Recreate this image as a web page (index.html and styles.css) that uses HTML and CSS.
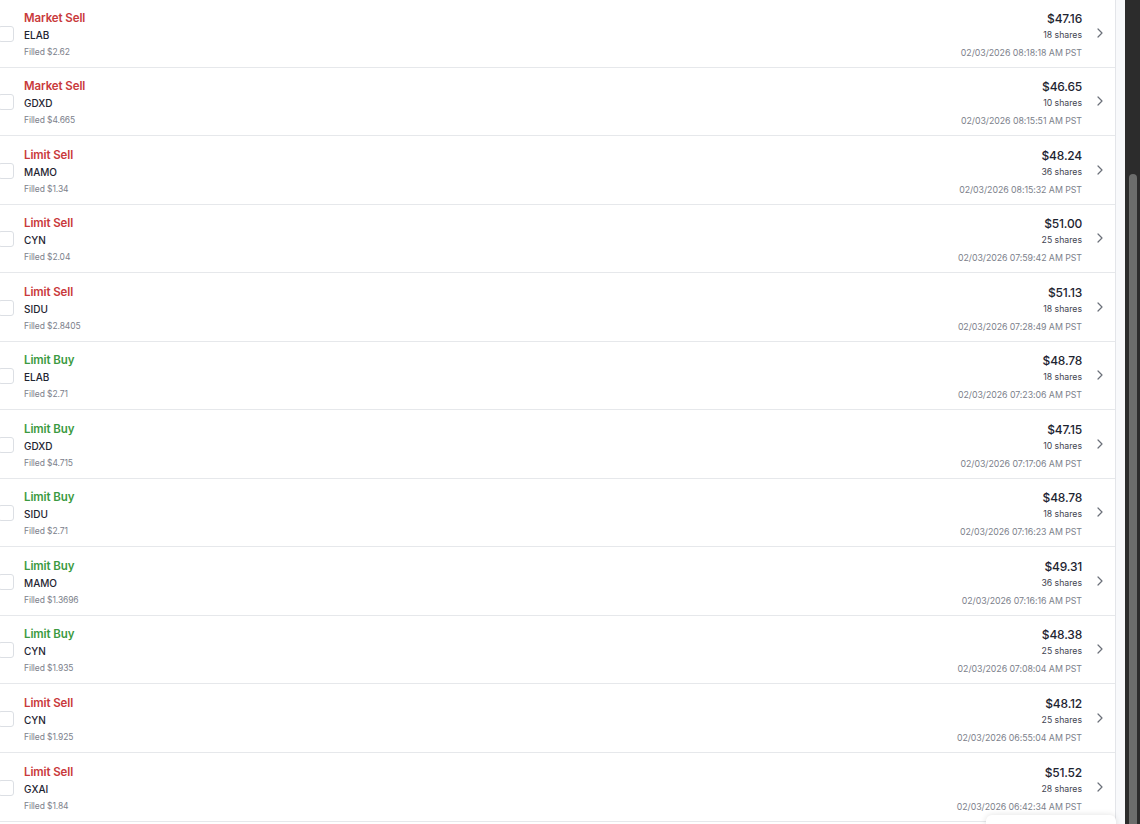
FILE: index.html
```html
<!DOCTYPE html>
<html>
<head>
<meta charset="utf-8">
<link rel="stylesheet" href="styles.css">
</head>
<body>
<div class="page">
  <div class="list" id="list"></div>
  <div class="gutter"></div>
  <div class="scrollbar"><div class="thumb"></div></div>
  <div class="toast"></div>
</div>
<script src="app.js"></script>
</body>
</html>
```
FILE: styles.css
```css
* { box-sizing: border-box; }
html, body { margin: 0; padding: 0; }
body {
  width: 1140px;
  height: 824px;
  overflow: hidden;
  background: #fff;
  font-family: Inter, "Noto Sans", sans-serif;
}
.page {
  display: flex;
  height: 824px;
  overflow: hidden;
  position: relative;
}
.list {
  width: 1116px;
  height: 825px;
  overflow: hidden;
  margin-top: -1px;
  border-right: 1px solid #e3e5e9;
}
.row {
  height: 68.55px;
  border-bottom: 1px solid #e6e8eb;
  display: flex;
  align-items: flex-start;
  padding-top: 10.5px;
}
.check {
  width: 16px;
  height: 16px;
  margin-left: -2px;
  margin-top: 16px;
  border: 1px solid #dcdfe4;
  border-radius: 3px;
  flex: none;
}
.left {
  margin-left: 10px;
  display: flex;
  flex-direction: column;
}
.right {
  margin-left: auto;
  display: flex;
  flex-direction: column;
  align-items: flex-end;
}
.line { height: 17px; line-height: 17px; white-space: nowrap; }
.type { font-size: 11.5px; font-weight: 600; letter-spacing: -0.1px; }
.sell { color: #c93a3c; }
.buy { color: #3b9a41; }
.ticker { font-size: 10px; font-weight: 500; color: #1e2431; }
.filled { font-size: 8.5px; color: #7c818b; letter-spacing: -0.1px; }
.price { font-size: 12px; font-weight: 500; color: #1e2431; letter-spacing: -0.2px; }
.shares { font-size: 8.7px; color: #3f4450; }
.time { font-size: 8.8px; color: #7c818b; letter-spacing: -0.05px; }
.chev {
  width: 33px;
  flex: none;
  display: flex;
  justify-content: center;
  padding-top: 18px;
  padding-left: 2px;
}
.chev svg { display: block; }
.gutter {
  width: 9px;
  background: #f8f9fb;
}
.scrollbar {
  width: 15px;
  background: #2c2c2c;
  position: relative;
}
.thumb {
  position: absolute;
  left: 4px;
  top: 174px;
  width: 8px;
  height: 700px;
  border-radius: 4px;
  background: #6c6d6c;
}
.toast {
  position: absolute;
  left: 986px;
  top: 815px;
  width: 130px;
  height: 40px;
  background: #fff;
  border-radius: 6px;
  box-shadow: 0 0 6px rgba(0,0,0,0.12);
}
```
FILE: app.js
```js
const rows = [
  ["Market Sell","sell","ELAB","$2.62","$47.16","18","02/03/2026 08:18:18 AM PST"],
  ["Market Sell","sell","GDXD","$4.665","$46.65","10","02/03/2026 08:15:51 AM PST"],
  ["Limit Sell","sell","MAMO","$1.34","$48.24","36","02/03/2026 08:15:32 AM PST"],
  ["Limit Sell","sell","CYN","$2.04","$51.00","25","02/03/2026 07:59:42 AM PST"],
  ["Limit Sell","sell","SIDU","$2.8405","$51.13","18","02/03/2026 07:28:49 AM PST"],
  ["Limit Buy","buy","ELAB","$2.71","$48.78","18","02/03/2026 07:23:06 AM PST"],
  ["Limit Buy","buy","GDXD","$4.715","$47.15","10","02/03/2026 07:17:06 AM PST"],
  ["Limit Buy","buy","SIDU","$2.71","$48.78","18","02/03/2026 07:16:23 AM PST"],
  ["Limit Buy","buy","MAMO","$1.3696","$49.31","36","02/03/2026 07:16:16 AM PST"],
  ["Limit Buy","buy","CYN","$1.935","$48.38","25","02/03/2026 07:08:04 AM PST"],
  ["Limit Sell","sell","CYN","$1.925","$48.12","25","02/03/2026 06:55:04 AM PST"],
  ["Limit Sell","sell","GXAI","$1.84","$51.52","28","02/03/2026 06:42:34 AM PST"]
];
const list = document.getElementById("list");
list.innerHTML = rows.map(r => `
  <div class="row">
    <div class="check"></div>
    <div class="left">
      <div class="line type ${r[1]}">${r[0]}</div>
      <div class="line ticker">${r[2]}</div>
      <div class="line filled">Filled ${r[3]}</div>
    </div>
    <div class="right">
      <div class="line price">${r[4]}</div>
      <div class="line shares">${r[5]} shares</div>
      <div class="line time">${r[6]}</div>
    </div>
    <div class="chev"><svg width="6" height="10" viewBox="0 0 6 10"><path d="M1 1 L5 5 L1 9" fill="none" stroke="#6b7079" stroke-width="1.2" stroke-linecap="round" stroke-linejoin="round"/></svg></div>
  </div>`).join("");
```
